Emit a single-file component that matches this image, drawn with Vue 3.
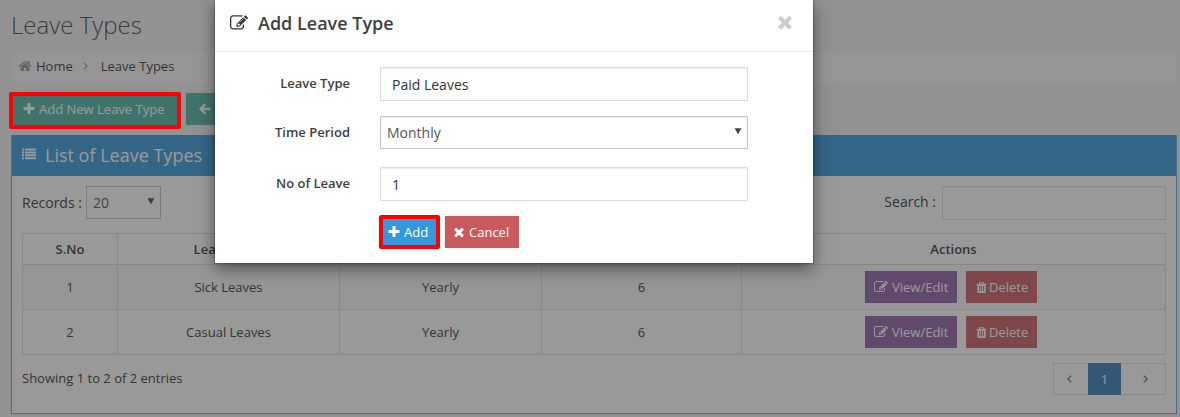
<script setup>
import { h } from 'vue'

const paths = {
  plus: 'M1600 736v192q0 40-28 68t-68 28h-416v416q0 40-28 68t-68 28h-192q-40 0-68-28t-28-68v-416h-416q-40 0-68-28t-28-68v-192q0-40 28-68t68-28h416v-416q0-40 28-68t68-28h192q40 0 68 28t28 68v416h416q40 0 68 28t28 68z',
  times: 'M1490 1322q0 40-28 68l-136 136q-28 28-68 28t-68-28l-294-294-294 294q-28 28-68 28t-68-28l-136-136q-28-28-28-68t28-68l294-294-294-294q-28-28-28-68t28-68l136-136q28-28 68-28t68 28l294 294 294-294q28-28 68-28t68 28l136 136q28 28 28 68t-28 68l-294 294 294 294q28 28 28 68z',
  edit: 'M888 1184l116-116-152-152-116 116v56h96v96h56zm440-720q-16-16-33 1l-350 350q-17 17-1 33t33-1l350-350q17-17 1-33zm80 594v190q0 119-84.500 203.500t-203.500 84.500h-832q-119 0-203.500-84.500t-84.500-203.500v-832q0-119 84.500-203.500t203.500-84.500h832q63 0 117 25 15 7 18 23 3 17-9 29l-49 49q-14 14-32 8-23-6-45-6h-832q-66 0-113 47t-47 113v832q0 66 47 113t113 47h832q66 0 113-47t47-113v-126q0-13 9-22l64-64q15-15 35-7t20 29zm-96-738l288 288-672 672h-288v-288zm444 132l-92 92-288-288 92-92q28-28 68-28t68 28l152 152q28 28 28 68t-28 68z',
  trash: 'M704 1376v-704q0-14-9-23t-23-9h-64q-14 0-23 9t-9 23v704q0 14 9 23t23 9h64q14 0 23-9t9-23zm256 0v-704q0-14-9-23t-23-9h-64q-14 0-23 9t-9 23v704q0 14 9 23t23 9h64q14 0 23-9t9-23zm256 0v-704q0-14-9-23t-23-9h-64q-14 0-23 9t-9 23v704q0 14 9 23t23 9h64q14 0 23-9t9-23zm-544-992h448l-48-117q-7-9-17-11h-317q-10 2-17 11zm928 32v64q0 14-9 23t-23 9h-96v948q0 83-47 143.500t-113 60.500h-832q-66 0-113-58.500t-47-141.500v-952h-96q-14 0-23-9t-9-23v-64q0-14 9-23t23-9h309l70-167q15-37 54-63t79-26h320q40 0 79 26t54 63l70 167h309q14 0 23 9t9 23z',
  home: 'M1472 992v480q0 26-19 45t-45 19h-384v-384h-256v384h-384q-26 0-45-19t-19-45v-480q0-1 .5-3t.5-3l575-474 575 474q1 2 1 6zm223-69l-62 74q-8 9-21 11h-3q-13 0-21-7l-692-577-692 577q-12 8-24 7-13-2-21-11l-62-74q-8-10-7-23.500t11-21.500l719-599q32-26 76-26t76 26l244 204v-195q0-14 9-23t23-9h192q14 0 23 9t9 23v408l219 182q10 8 11 21.500t-7 23.500z',
  list: 'M0 192h256v256h-256zM384 192h1408v256h-1408zM0 560h256v256h-256zM384 560h1408v256h-1408zM0 928h256v256h-256zM384 928h1408v256h-1408zM0 1296h256v256h-256zM384 1296h1408v256h-1408z',
  arrow: 'M130 896L850 150L1060 360L680 740H1620V1052H680L1060 1432L850 1642Z',
  left: 'M1130 420L1230 520L854 896L1230 1272L1130 1372L654 896Z',
  right: 'M662 420L562 520L938 896L562 1272L662 1372L1138 896Z',
  caret: 'M128 256H1664L896 1650Z',
}
const Icon = (props) =>
  h('svg', { viewBox: '0 0 1792 1792', fill: 'currentColor' }, [h('path', { d: paths[props.name] })])
Icon.props = ['name']

const rows = [
  { no: 1, type: 'Sick Leaves', period: 'Yearly', count: 6 },
  { no: 2, type: 'Casual Leaves', period: 'Yearly', count: 6 },
]
</script>

<template>
  <div class="page">
    <h3 class="title">Leave Types</h3>
    <nav class="crumbs">
      <Icon name="home" class="i-home" /><span>Home</span>
      <Icon name="right" class="i-sep" /><span>Leave Types</span>
    </nav>
    <div class="toolbar">
      <button class="btn green new"><Icon name="plus" class="i14" /><span>Add New Leave Type</span></button>
      <button class="btn green back"><Icon name="arrow" class="i14" /><span>Back</span></button>
    </div>
    <section class="panel">
      <header class="panel-head"><Icon name="list" class="i-list" /><span>List of Leave Types</span></header>
      <div class="filters">
        <span>Records :</span>
        <div class="select small"><span>20</span><Icon name="caret" class="i-caret" /></div>
        <span class="search-label">Search :</span>
        <input class="search" />
      </div>
      <table>
        <colgroup><col class="c1" /><col class="c2" /><col class="c3" /><col class="c4" /><col /></colgroup>
        <thead>
          <tr><th>S.No</th><th>Leave Type</th><th>Time Period</th><th>No of Leave</th><th>Actions</th></tr>
        </thead>
        <tbody>
          <tr v-for="r in rows" :key="r.no">
            <td>{{ r.no }}</td><td>{{ r.type }}</td><td>{{ r.period }}</td><td>{{ r.count }}</td>
            <td>
              <div class="actions">
                <button class="btn purple"><Icon name="edit" class="i14" /><span>View/Edit</span></button>
                <button class="btn red del"><Icon name="trash" class="i-trash" /><span>Delete</span></button>
              </div>
            </td>
          </tr>
        </tbody>
      </table>
      <footer class="foot">
        <span class="info">Showing 1 to 2 of 2 entries</span>
        <div class="pager">
          <span class="prev"><Icon name="left" class="i14" /></span>
          <span class="current">1</span>
          <span class="next"><Icon name="right" class="i14" /></span>
        </div>
      </footer>
    </section>

    <div class="backdrop"></div>
    <div class="modal">
      <header class="modal-head">
        <Icon name="edit" class="i18" /><h4>Add Leave Type</h4><Icon name="times" class="i-close" />
      </header>
      <form class="form">
        <label>Leave Type</label><input class="field" value="Paid Leaves" />
        <label>Time Period</label>
        <div class="select"><span>Monthly</span><Icon name="caret" class="i-caret" /></div>
        <label class="third">No of Leave</label><input class="field third" value="1" />
      </form>
      <div class="modal-actions">
        <button class="btn blue"><Icon name="plus" class="i14" /><span>Add</span></button>
        <button class="btn red cancel"><Icon name="times" class="i14" /><span>Cancel</span></button>
        <div class="mark mark-add"></div>
      </div>
    </div>
    <div class="mark mark-new"></div>
  </div>
</template>

<style>
body { background: #f1f1f1; overflow: hidden; }
</style>

<style scoped>
* { box-sizing: border-box; }
svg { display: block; flex: none; }
.page {
  position: relative; height: 417px; padding: 0 3px 0 11px; overflow: hidden;
  background: #f1f1f1; color: #333; font: 13px/18px "Open Sans", sans-serif;
}
.title { margin: 0; padding-top: 8px; height: 53px; font-size: 24px; line-height: 33px; font-weight: 300; color: #444; }
.crumbs { display: flex; align-items: center; height: 30px; padding: 0 7px 4px; background: #f7f7f7; }
.i-home { width: 14px; height: 14px; margin-right: 4px; color: #999; }
.i-sep { width: 14px; height: 14px; margin: 0 8px 0 6px; color: #999; }
.toolbar { display: flex; gap: 9px; height: 52px; padding: 10px 0 0 1px; }
.btn {
  display: flex; align-items: center; height: 32px; border: 0; padding: 0 8px; gap: 3px;
  color: #fff; font: 13px/18px "Open Sans", sans-serif; white-space: nowrap;
}
.i14 { width: 14px; height: 14px; }
.i-trash { width: 13px; height: 13px; }
.green { background: #4db3a2; }
.new { width: 165px; padding-left: 10px; }
.back { padding-left: 12px; }
.panel { height: 279px; border: 1px solid #60aee4; border-top: 0; background: #fff; }
.panel-head { display: flex; align-items: center; height: 41px; padding: 0 0 1px 10px; gap: 9px; background: #3598dc; color: #fff; font-size: 18px; }
.i-list { width: 14px; height: 14px; margin-top: -3px; }
.filters { display: flex; height: 57px; padding: 10px 10px 0; font-size: 14px; line-height: 33px; }
.select {
  display: flex; align-items: center; justify-content: space-between; height: 33px; padding: 0 5px 0 6px;
  border: 1px solid #c2c2c2; background: #fff; color: #555; font-size: 14px;
}
.small { width: 75px; margin-left: 4px; }
.i-caret { width: 8px; height: 8px; color: #444; margin-top: -3px; }
.search-label { margin-left: auto; line-height: 32px; }
input { font: 14px "Open Sans", sans-serif; color: #333; outline: 0; border-radius: 0; }
.search { width: 224px; height: 34px; margin-left: 6px; border: 1px solid #ddd; box-shadow: inset 0 1px 1px rgba(0,0,0,.075); }
table { width: 1144px; margin-left: 10px; border-collapse: collapse; table-layout: fixed; text-align: center; }
.c1 { width: 95px; } .c2 { width: 222px; } .c3 { width: 202px; } .c4 { width: 200px; }
th, td { border: 1px solid #ddd; padding: 0; height: 45px; }
th { height: 31px; font-weight: 600; }
tbody tr:nth-child(odd) { background: #f9f9f9; }
.actions { display: flex; justify-content: center; gap: 9px; padding-right: 5px; }
.purple { background: #8e5fa2; width: 92px; padding-left: 9px; gap: 4px; }
.red { background: #cb5a5e; }
.del { width: 71px; padding: 0 9px; gap: 1px; }
.foot { display: flex; justify-content: space-between; padding: 8px 10px 0; line-height: 32px; }
.info { margin-top: -1px; }
.pager { display: flex; width: 113px; height: 32px; border: 1px solid #ddd; color: #555; }
.prev, .next { display: flex; align-items: center; }
.prev { width: 34px; padding-left: 8px; } .next { flex: 1; padding-left: 18px; }
.current { width: 33px; height: 32px; margin-top: -1px; background: #337ab7; color: #fff; text-align: center; }
.backdrop { position: absolute; inset: 0; background: #333; opacity: .5; }
.modal { position: absolute; left: 215px; top: 0; width: 598px; height: 263px; background: #fff; box-shadow: 0 5px 15px rgba(0,0,0,.5), 0 0 0 1px rgba(0,0,0,.2); }
.modal-head { display: flex; align-items: center; height: 52px; padding: 0 20px 5px 15px; border-bottom: 1px solid #e9e9e9; }
.modal-head h4 { margin: 0 auto 0 10px; font-size: 18px; line-height: 26px; font-weight: 600; color: #3f3f3f; }
.i18 { width: 18px; height: 18px; }
.i-close { width: 20px; height: 20px; margin: -3px -2px 0 0; color: #ccc; }
.form { display: grid; grid-template-columns: 135px 368px; column-gap: 30px; grid-template-rows: 49px 49px 36px; align-items: start; padding-top: 15px; }
label { text-align: right; font-weight: 600; line-height: 33px; color: #3f3f3f; }
.field { width: 368px; height: 34px; padding: 0 12px 0 11px; border: 1px solid #ddd; box-shadow: inset 0 1px 1px rgba(0,0,0,.075); }
.form .select { border-color: #c4c4c4; box-shadow: inset 0 1px 1px rgba(0,0,0,.075); }
.third { margin-top: 2px; }
.modal-actions { position: relative; display: flex; gap: 6px; margin: 15px 0 0 165px; }
.blue { background: #3598dc; width: 59px; padding-left: 7px; }
.cancel { width: 74px; padding-left: 7px; }
.mark { position: absolute; border: 4px solid #f00; border-radius: 2px; }
.mark-add { left: -1px; top: -1px; width: 61px; height: 34px; }
.mark-new { left: 9px; top: 92px; width: 172px; height: 37px; }
</style>
